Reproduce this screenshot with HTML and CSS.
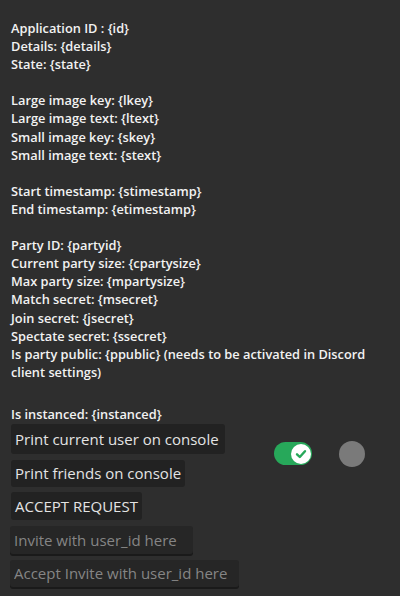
FILE: index.html
```html
<!DOCTYPE html>
<html>
<head>
<meta charset="utf-8">
<link rel="stylesheet" href="styles.css">
</head>
<body>
<div class="panel">
  <div class="info">
    <p>Application ID : {id}<br>Details: {details}<br>State: {state}</p>
    <p>Large image key: {lkey}<br>Large image text: {ltext}<br>Small image key: {skey}<br>Small image text: {stext}</p>
    <p>Start timestamp: {stimestamp}<br>End timestamp: {etimestamp}</p>
    <p>Party ID: {partyid}<br>Current party size: {cpartysize}<br>Max party size: {mpartysize}<br>Match secret: {msecret}<br>Join secret: {jsecret}<br>Spectate secret: {ssecret}<br>Is party public: {ppublic} (needs to be activated in Discord client settings)</p>
    <p class="inst">Is instanced: {instanced}</p>
  </div>
  <div class="controls">
    <div class="col">
      <button class="btn b1">Print current user on console</button>
      <button class="btn b2">Print friends on console</button>
      <button class="btn b3">ACCEPT REQUEST</button>
      <input class="field f1" placeholder="Invite with user_id here">
      <input class="field f2" placeholder="Accept Invite with user_id here">
    </div>
    <div class="toggles">
      <div class="switch">
        <div class="knob">
          <svg width="14" height="14" viewBox="0 0 14 14"><path d="M3 7.3 L5.8 10 L11 4.2" fill="none" stroke="#27a85a" stroke-width="2.4" stroke-linecap="round" stroke-linejoin="round"/></svg>
        </div>
      </div>
      <div class="dot"></div>
    </div>
  </div>
</div>
</body>
</html>
```
FILE: styles.css
```css
html, body {
  margin: 0;
  padding: 0;
  background: #2e2e2e;
}
.panel {
  width: 400px;
  height: 596px;
  box-sizing: border-box;
  padding: 19px 11px 0 11px;
  font-family: "Open Sans", "Liberation Sans", sans-serif;
  color: #f2f2f2;
  overflow: hidden;
}
.info p {
  margin: 0 0 18.1px 0;
  font-size: 12.8px;
  font-weight: 600;
  line-height: 18.1px;
}
.info p.inst {
  margin-top: 24px;
  margin-bottom: 0;
}
.controls {
  display: flex;
  margin-top: 1px;
}
.col {
  display: flex;
  flex-direction: column;
  align-items: flex-start;
}
.btn {
  font-family: "Open Sans", "Liberation Sans", sans-serif;
  font-size: 15px;
  font-weight: 500;
  color: #e4e4e4;
  background: #222222;
  border: none;
  border-radius: 3px;
  padding: 0 4px;
  height: 28px;
  margin: 0;
}
.btn.b1 {
  height: 30px;
  width: 214px;
  text-align: left;
}
.btn.b2 { height: 27px; margin-top: 6px; }
.btn.b3 { height: 28px; margin-top: 5px; }
.field {
  font-family: "Open Sans", "Liberation Sans", sans-serif;
  font-size: 15px;
  font-weight: 500;
  color: #e4e4e4;
  background: #262626;
  border: none;
  border-radius: 3px;
  box-shadow: 0 2px 0 #1a1a1a;
  padding: 0 4px;
  margin: 0 0 0 -1px;
  outline: none;
  box-sizing: border-box;
}
.field::placeholder {
  color: #858585;
}
.f1 { width: 183px; height: 28px; margin-top: 6px; }
.f2 { width: 229px; height: 27px; margin-top: 6px; }
.toggles {
  display: flex;
  align-items: center;
  margin-left: 35px;
  margin-top: 17px;
  height: 26px;
}
.switch {
  width: 38px;
  height: 23px;
  border-radius: 12px;
  background: #27a85a;
  display: flex;
  align-items: center;
  justify-content: flex-end;
  padding-right: 1px;
  box-sizing: border-box;
}
.knob {
  width: 20px;
  height: 20px;
  border-radius: 50%;
  background: #ffffff;
  display: flex;
  align-items: center;
  justify-content: center;
}
.knob svg { display: block; }
.dot {
  width: 26px;
  height: 26px;
  border-radius: 50%;
  background: #7a7a7a;
  margin-left: 27px;
}
```
